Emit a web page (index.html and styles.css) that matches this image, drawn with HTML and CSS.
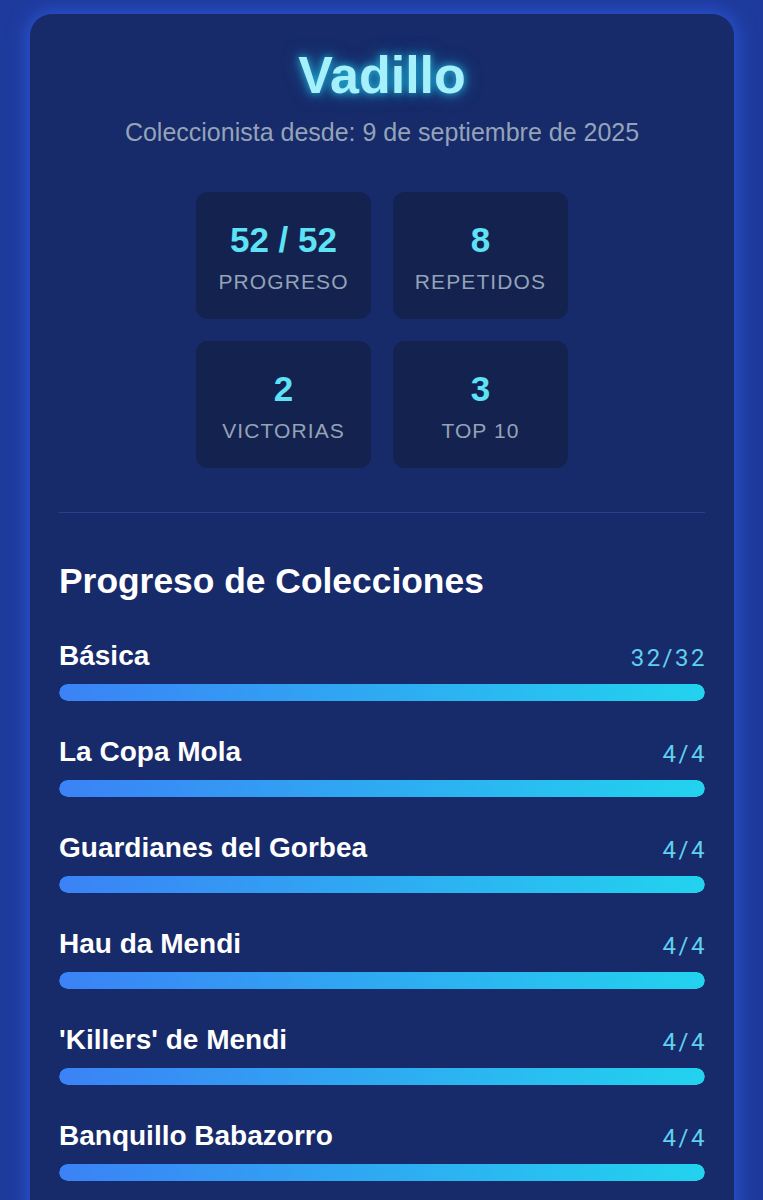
FILE: index.html
```html
<!DOCTYPE html>
<html lang="es">
<head>
<meta charset="utf-8">
<title>Vadillo</title>
<link rel="stylesheet" href="styles.css">
</head>
<body>
<main class="page">
  <section class="card">
    <h1 class="name">Vadillo</h1>
    <p class="since">Coleccionista desde: 9 de septiembre de 2025</p>
    <div class="stats">
      <div class="stat"><div class="stat-value">52 / 52</div><div class="stat-label">PROGRESO</div></div>
      <div class="stat"><div class="stat-value">8</div><div class="stat-label">REPETIDOS</div></div>
      <div class="stat"><div class="stat-value">2</div><div class="stat-label">VICTORIAS</div></div>
      <div class="stat"><div class="stat-value">3</div><div class="stat-label">TOP 10</div></div>
    </div>
    <hr class="divider">
    <h2 class="section-title">Progreso de Colecciones</h2>
    <ul class="collections">
      <li class="collection"><div class="row"><span class="c-name">Básica</span><span class="c-count">32/32</span></div><div class="bar"><div class="fill" style="width:100%"></div></div></li>
      <li class="collection"><div class="row"><span class="c-name">La Copa Mola</span><span class="c-count">4/4</span></div><div class="bar"><div class="fill" style="width:100%"></div></div></li>
      <li class="collection"><div class="row"><span class="c-name">Guardianes del Gorbea</span><span class="c-count">4/4</span></div><div class="bar"><div class="fill" style="width:100%"></div></div></li>
      <li class="collection"><div class="row"><span class="c-name">Hau da Mendi</span><span class="c-count">4/4</span></div><div class="bar"><div class="fill" style="width:100%"></div></div></li>
      <li class="collection"><div class="row"><span class="c-name">'Killers' de Mendi</span><span class="c-count">4/4</span></div><div class="bar"><div class="fill" style="width:100%"></div></div></li>
      <li class="collection"><div class="row"><span class="c-name">Banquillo Babazorro</span><span class="c-count">4/4</span></div><div class="bar"><div class="fill" style="width:100%"></div></div></li>
    </ul>
  </section>
</main>
</body>
</html>
```

FILE: styles.css
```css
* { box-sizing: border-box; }
html, body { margin: 0; padding: 0; }
body {
  background: #1e3a9c;
  font-family: "Liberation Sans", Arial, sans-serif;
  color: #ffffff;
  height: 1200px;
  overflow: hidden;
}
.page {
  padding: 14px 29px 0 30px;
}
.card {
  width: 704px;
  background: #172a69;
  border-radius: 22px;
  box-shadow: 0 0 18px 4px rgba(45, 90, 220, 0.75);
  padding: 30px 29px 60px;
}
.name {
  margin: 0;
  text-align: center;
  font-size: 52px;
  line-height: 62px;
  font-weight: 700;
  color: #a5f0fb;
  text-shadow: 0 0 8px rgba(34, 211, 238, 0.85), 0 0 18px rgba(34, 190, 238, 0.55);
}
.since {
  margin: 11px 0 0;
  text-align: center;
  font-size: 25px;
  line-height: 30px;
  color: #94a3b8;
}
.stats {
  margin: 45px auto 0;
  display: grid;
  grid-template-columns: 175px 175px;
  grid-auto-rows: 127px;
  gap: 22px;
  justify-content: center;
}
.stat {
  background: #14224f;
  border-radius: 12px;
  padding-top: 28px;
  text-align: center;
}
.stat-value {
  font-size: 35px;
  line-height: 40px;
  font-weight: 700;
  color: #5ee2f6;
}
.stat-label {
  margin-top: 10px;
  font-size: 21px;
  line-height: 24px;
  letter-spacing: 1.1px;
  color: #94a3b8;
}
.divider {
  margin: 44px 0 0;
  border: 0;
  height: 1px;
  background: #2a3f8c;
}
.section-title {
  margin: 47px 0 0;
  font-size: 35.4px;
  line-height: 42px;
  font-weight: 700;
  color: #ffffff;
}
.collections {
  list-style: none;
  margin: 37px 0 0;
  padding: 0;
  display: flex;
  flex-direction: column;
  gap: 34px;
}
.row {
  display: flex;
  justify-content: space-between;
  align-items: center;
  height: 34px;
}
.c-name {
  font-size: 28px;
  font-weight: 700;
  line-height: 34px;
}
.c-count {
  font-family: Roboto, "Liberation Sans", sans-serif;
  font-size: 24px;
  letter-spacing: 2.5px;
  margin-right: -2px;
  color: #5fd0ee;
  padding-top: 4px;
}
.bar {
  margin-top: 11px;
  height: 17px;
  border-radius: 9px;
  background: #0f1c4a;
  overflow: hidden;
}
.fill {
  height: 100%;
  border-radius: 9px;
  background: linear-gradient(90deg, #3b82f6 0%, #22d3ee 100%);
}
```
